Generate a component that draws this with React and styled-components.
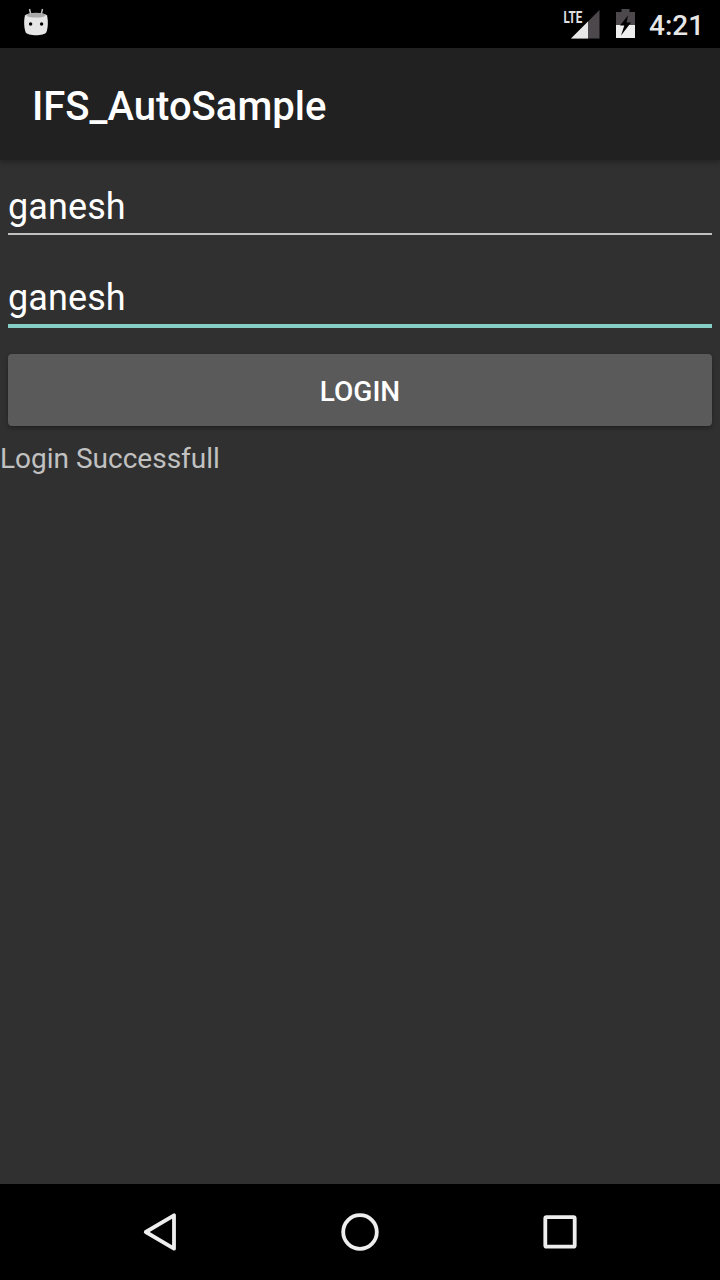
import React from 'react';
import styled, { createGlobalStyle } from 'styled-components';

const GlobalStyle = createGlobalStyle`
  * { box-sizing: border-box; }
  body {
    margin: 0;
    background: #303030;
    font-family: Roboto, sans-serif;
  }
`;

const Screen = styled.div`
  display: flex;
  flex-direction: column;
  width: 720px;
  height: 1280px;
  background: #303030;
  overflow: hidden;
`;

const StatusBar = styled.header`
  display: flex;
  align-items: center;
  height: 48px;
  padding: 0 17px 0 24px;
  background: #000;
`;

const StatusIcons = styled.div`
  display: flex;
  align-items: center;
  gap: 16px;
  margin-left: auto;
`;

const StatusGlyph = styled.svg`
  display: block;
  flex: none;
`;

const Clock = styled.span`
  width: 54px;
  padding-top: 3px;
  margin-left: -3px;
  font-size: 28px;
  font-weight: 500;
  line-height: 45px;
  color: #e6e6e6;
  white-space: nowrap;
`;

const AppBar = styled.div`
  position: relative;
  display: flex;
  align-items: center;
  height: 112px;
  padding: 5px 32px 0;
  background: #212121;
  box-shadow: 0 2px 5px rgba(0, 0, 0, 0.3);
`;

const Title = styled.h1`
  margin: 0;
  font-size: 40px;
  font-weight: 500;
  line-height: 47px;
  color: #fff;
`;

const Form = styled.main`
  display: flex;
  flex: 1;
  flex-direction: column;
`;

const Field = styled.div`
  height: 91px;
  padding: 25px 8px 0;
`;

const Input = styled.input`
  display: block;
  width: 100%;
  height: ${({ $active }) => ($active ? 52 : 50)}px;
  padding: 0 0 4px;
  border: 0;
  border-bottom: ${({ $active }) => ($active ? '4px solid #84cec6' : '2px solid #c1c1c1')};
  outline: 0;
  border-radius: 0;
  background: transparent;
  font: 400 36px/44px Roboto, sans-serif;
  letter-spacing: 0.1px;
  color: #fff;
`;

const LoginButton = styled.button`
  height: 72px;
  margin: 12px 8px 16px;
  padding: 3px 0 0;
  border: 0;
  border-radius: 4px;
  background: #5a5a5a;
  box-shadow: 0 2px 4px rgba(0, 0, 0, 0.35);
  font: 500 28px/33px Roboto, sans-serif;
  color: #fff;
`;

const Message = styled.p`
  margin: 0;
  font-size: 28px;
  line-height: 33px;
  color: #c1c1c1;
`;

const NavBar = styled.nav`
  display: flex;
  justify-content: center;
  gap: 152px;
  height: 96px;
  padding-top: 24px;
  background: #000;
`;

const NavIcon = styled.svg`
  width: 48px;
  height: 48px;
  fill: none;
  stroke: #eee;
  stroke-width: 3.8;
  stroke-linejoin: round;
`;

const AndroidIcon = () => (
  <StatusGlyph width="24" height="48" viewBox="0 0 24 48">
    <path d="M5.5 9l1.2 5M18.5 9l-1.2 5" stroke="#c9c9c9" strokeWidth="1.4" />
    <path d="M1 15.5C3 12 21 12 23 15.5C24.2 20 24.2 27 22.5 32C20.5 36.3 3.5 36.3 1.5 32C-.2 27-.2 20 1 15.5Z" fill="#e6e6e6" />
    <ellipse cx="12" cy="15.2" rx="9.5" ry="2.4" fill="#aaa" />
    <circle cx="6.6" cy="24" r="1.7" fill="#000" />
    <circle cx="17.6" cy="24" r="1.7" fill="#000" />
  </StatusGlyph>
);

const SignalIcon = () => (
  <StatusGlyph width="37" height="48" viewBox="0 0 37 48">
    <path d="M36.5 10V38.5H8Z" fill="#4c484c" />
    <path d="M25 21.5V38.5H8Z" fill="#e8e8e8" />
    <text
      x="0.5"
      y="22.7"
      textLength="18.7"
      lengthAdjust="spacingAndGlyphs"
      fontFamily="Roboto, sans-serif"
      fontSize="17"
      fontWeight="700"
      fill="#e0e0e0"
    >
      LTE
    </text>
  </StatusGlyph>
);

const BatteryIcon = () => (
  <StatusGlyph width="20" height="48" viewBox="0 0 20 48">
    <path d="M0 12H5.5V9H13.5V12H19V25H0Z" fill="#4c484c" />
    <path d="M0 25H19V38H0Z" fill="#eee" />
    <path d="M12 15.5L4 25.5H8.3L5 35.5L15 22.5H10.5Z" fill="#000" />
  </StatusGlyph>
);

export default function App() {
  return (
    <Screen>
      <GlobalStyle />
      <StatusBar>
        <AndroidIcon />
        <StatusIcons>
          <SignalIcon />
          <BatteryIcon />
          <Clock>4:21</Clock>
        </StatusIcons>
      </StatusBar>
      <AppBar>
        <Title>IFS_AutoSample</Title>
      </AppBar>
      <Form>
        <Field>
          <Input defaultValue="ganesh" spellCheck={false} />
        </Field>
        <Field>
          <Input $active defaultValue="ganesh" spellCheck={false} />
        </Field>
        <LoginButton>LOGIN</LoginButton>
        <Message>Login Successfull</Message>
      </Form>
      <NavBar>
        <NavIcon viewBox="0 0 48 48">
          <path d="M38 7.3V40.7L9.8 24Z" />
        </NavIcon>
        <NavIcon viewBox="0 0 48 48">
          <circle cx="24" cy="24" r="16.8" />
        </NavIcon>
        <NavIcon viewBox="0 0 48 48">
          <rect x="9.3" y="9.2" width="29.4" height="29.4" rx="1.2" />
        </NavIcon>
      </NavBar>
    </Screen>
  );
}
